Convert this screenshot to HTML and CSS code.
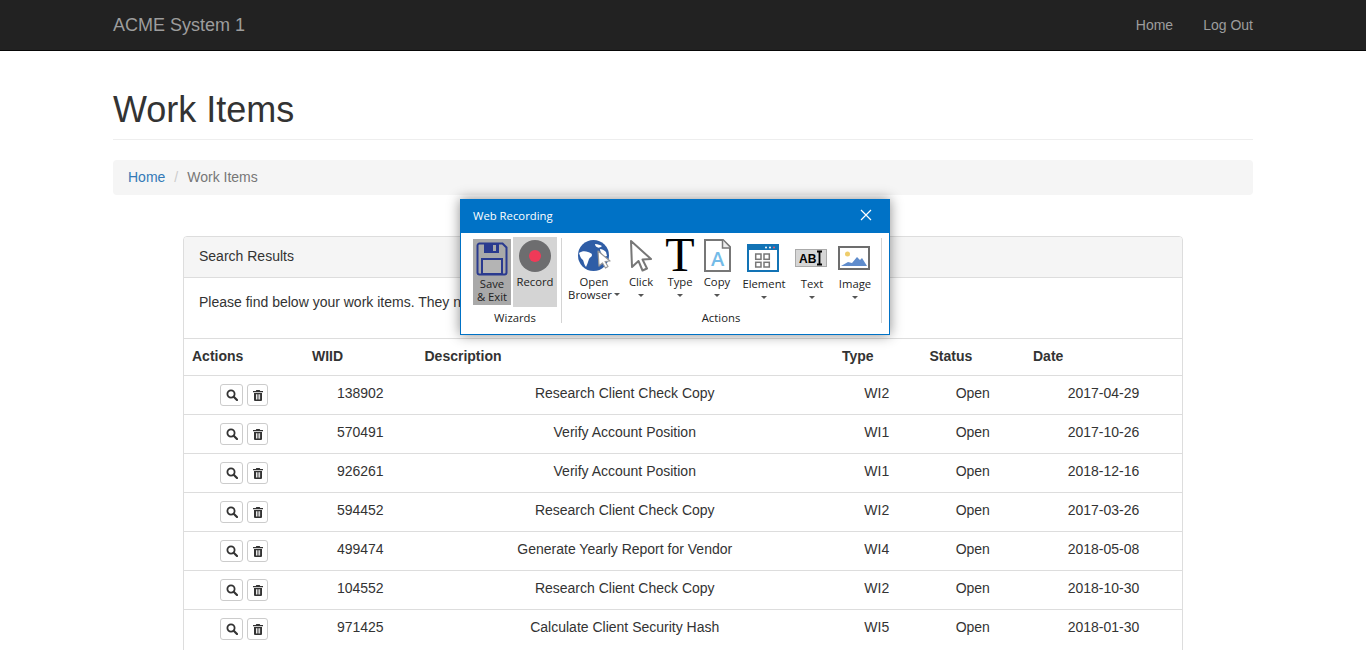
FILE: index.html
```html
<!DOCTYPE html>
<html lang="en">
<head>
<meta charset="utf-8">
<title>Work Items</title>
<link rel="stylesheet" href="styles.css">
</head>
<body>
<nav class="navbar">
  <div class="container navbar-inner">
    <a class="brand" href="#">ACME System 1</a>
    <ul class="nav-links">
      <li><a href="#">Home</a></li>
      <li><a href="#">Log Out</a></li>
    </ul>
  </div>
</nav>
<main class="container">
  <div class="page-header"><h1>Work Items</h1></div>
  <ol class="breadcrumb">
    <li><a href="#">Home</a></li>
    <li class="sep">/</li>
    <li class="active">Work Items</li>
  </ol>
  <section class="panel">
    <div class="panel-heading">Search Results</div>
    <div class="panel-body">Please find below your work items. They need to be completed in order.</div>
    <table class="table">
      <colgroup>
        <col class="c-actions"><col class="c-wiid"><col class="c-desc"><col class="c-type"><col class="c-status"><col class="c-date">
      </colgroup>
      <thead>
        <tr><th>Actions</th><th>WIID</th><th>Description</th><th class="th-nudge">Type</th><th class="th-nudge">Status</th><th>Date</th></tr>
      </thead>
      <tbody>
        <tr><td><div class="btns"><button class="btn btn-search"><svg viewBox="0 0 12 12" class="gi"><circle cx="5" cy="5" r="3.6" class="gi-ring"/><path d="M7.7 7.7 11 11" class="gi-handle"/></svg></button><button class="btn btn-trash"><svg viewBox="0 0 12 12" class="gi"><path d="M4.3 1h3.4l.5 1H11v1.2H1V2h2.800zM2 4h8v7a1 1 0 0 1-1 1H3a1 1 0 0 1-1-1zm2 1.200v5.300h.9V5.200zm1.600 0v5.300h.9V5.200zm1.600 0v5.300h.9V5.200z" fill-rule="evenodd"/></svg></button></div></td><td>138902</td><td>Research Client Check Copy</td><td>WI2</td><td>Open</td><td>2017-04-29</td></tr>
        <tr><td><div class="btns"><button class="btn btn-search"><svg viewBox="0 0 12 12" class="gi"><circle cx="5" cy="5" r="3.6" class="gi-ring"/><path d="M7.7 7.7 11 11" class="gi-handle"/></svg></button><button class="btn btn-trash"><svg viewBox="0 0 12 12" class="gi"><path d="M4.3 1h3.4l.5 1H11v1.2H1V2h2.800zM2 4h8v7a1 1 0 0 1-1 1H3a1 1 0 0 1-1-1zm2 1.200v5.300h.9V5.200zm1.600 0v5.300h.9V5.200zm1.600 0v5.300h.9V5.200z" fill-rule="evenodd"/></svg></button></div></td><td>570491</td><td>Verify Account Position</td><td>WI1</td><td>Open</td><td>2017-10-26</td></tr>
        <tr><td><div class="btns"><button class="btn btn-search"><svg viewBox="0 0 12 12" class="gi"><circle cx="5" cy="5" r="3.6" class="gi-ring"/><path d="M7.7 7.7 11 11" class="gi-handle"/></svg></button><button class="btn btn-trash"><svg viewBox="0 0 12 12" class="gi"><path d="M4.3 1h3.4l.5 1H11v1.2H1V2h2.800zM2 4h8v7a1 1 0 0 1-1 1H3a1 1 0 0 1-1-1zm2 1.200v5.300h.9V5.200zm1.600 0v5.300h.9V5.200zm1.600 0v5.300h.9V5.200z" fill-rule="evenodd"/></svg></button></div></td><td>926261</td><td>Verify Account Position</td><td>WI1</td><td>Open</td><td>2018-12-16</td></tr>
        <tr><td><div class="btns"><button class="btn btn-search"><svg viewBox="0 0 12 12" class="gi"><circle cx="5" cy="5" r="3.6" class="gi-ring"/><path d="M7.7 7.7 11 11" class="gi-handle"/></svg></button><button class="btn btn-trash"><svg viewBox="0 0 12 12" class="gi"><path d="M4.3 1h3.4l.5 1H11v1.2H1V2h2.800zM2 4h8v7a1 1 0 0 1-1 1H3a1 1 0 0 1-1-1zm2 1.200v5.300h.9V5.200zm1.600 0v5.300h.9V5.200zm1.600 0v5.300h.9V5.200z" fill-rule="evenodd"/></svg></button></div></td><td>594452</td><td>Research Client Check Copy</td><td>WI2</td><td>Open</td><td>2017-03-26</td></tr>
        <tr><td><div class="btns"><button class="btn btn-search"><svg viewBox="0 0 12 12" class="gi"><circle cx="5" cy="5" r="3.6" class="gi-ring"/><path d="M7.7 7.7 11 11" class="gi-handle"/></svg></button><button class="btn btn-trash"><svg viewBox="0 0 12 12" class="gi"><path d="M4.3 1h3.4l.5 1H11v1.2H1V2h2.800zM2 4h8v7a1 1 0 0 1-1 1H3a1 1 0 0 1-1-1zm2 1.200v5.300h.9V5.200zm1.600 0v5.300h.9V5.200zm1.600 0v5.300h.9V5.200z" fill-rule="evenodd"/></svg></button></div></td><td>499474</td><td>Generate Yearly Report for Vendor</td><td>WI4</td><td>Open</td><td>2018-05-08</td></tr>
        <tr><td><div class="btns"><button class="btn btn-search"><svg viewBox="0 0 12 12" class="gi"><circle cx="5" cy="5" r="3.6" class="gi-ring"/><path d="M7.7 7.7 11 11" class="gi-handle"/></svg></button><button class="btn btn-trash"><svg viewBox="0 0 12 12" class="gi"><path d="M4.3 1h3.4l.5 1H11v1.2H1V2h2.800zM2 4h8v7a1 1 0 0 1-1 1H3a1 1 0 0 1-1-1zm2 1.200v5.300h.9V5.200zm1.600 0v5.300h.9V5.200zm1.600 0v5.300h.9V5.200z" fill-rule="evenodd"/></svg></button></div></td><td>104552</td><td>Research Client Check Copy</td><td>WI2</td><td>Open</td><td>2018-10-30</td></tr>
        <tr><td><div class="btns"><button class="btn btn-search"><svg viewBox="0 0 12 12" class="gi"><circle cx="5" cy="5" r="3.6" class="gi-ring"/><path d="M7.7 7.7 11 11" class="gi-handle"/></svg></button><button class="btn btn-trash"><svg viewBox="0 0 12 12" class="gi"><path d="M4.3 1h3.4l.5 1H11v1.2H1V2h2.800zM2 4h8v7a1 1 0 0 1-1 1H3a1 1 0 0 1-1-1zm2 1.200v5.300h.9V5.200zm1.600 0v5.300h.9V5.200zm1.600 0v5.300h.9V5.200z" fill-rule="evenodd"/></svg></button></div></td><td>971425</td><td>Calculate Client Security Hash</td><td>WI5</td><td>Open</td><td>2018-01-30</td></tr>
      </tbody>
    </table>
  </section>
</main>

<aside class="recorder">
  <header class="rec-title">
    <span>Web Recording</span>
    <svg class="rec-close" viewBox="0 0 12 12"><path d="M1 1l10 10M11 1 1 11"/></svg>
  </header>
  <div class="ribbon">
    <div class="group group-wizards">
      <div class="group-items">
        <div class="wiz wiz-save">
          <svg class="ic-save" viewBox="0 0 32 34">
            <path d="M1.500 3.500a2 2 0 0 1 2-2h23l4 4v25a2 2 0 0 1-2 2h-25a2 2 0 0 1-2-2z" fill="#a9a9a9" stroke="#2a3a8f" stroke-width="2"/>
            <rect x="8" y="2" width="15" height="9" fill="#2a3a8f"/>
            <rect x="17" y="3" width="3" height="6" fill="#a9a9a9"/>
            <rect x="6" y="17" width="20" height="15" fill="#b4b4b4" stroke="#2a3a8f" stroke-width="2"/>
          </svg>
          <span>Save<br>&amp; Exit</span>
        </div>
        <div class="wiz wiz-record">
          <svg class="ic-record" viewBox="0 0 32 32"><circle cx="16" cy="16" r="16" fill="#6d6d6f"/><circle cx="16" cy="16" r="6" fill="#f03a58"/></svg>
          <span>Record</span>
        </div>
      </div>
      <div class="group-label">Wizards</div>
    </div>
    <div class="group group-actions">
      <div class="group-items">
        <div class="act act-open">
          <div class="act-icon">
            <svg class="ic-globe" viewBox="0 0 34 32">
              <circle cx="15.500" cy="15.500" r="15.500" fill="#2f5da6"/>
              <path d="M1 13c3-2 6-2 9-1 2 1 4 1 4 3 0 2-2 2-3 4-1 3-2 6-3 8-2-2-2-5-3-7-2-1-3-4-4-7zM17 4c3 0 5 1 7 2-2 2-4 2-5 1-1 0-2-2-2-3zM22 9c2 0 4 1 6 3l1 4c-2 1-3 0-4-1-2-2-3-4-3-6z" fill="#fff"/>
              <path d="M20 11 32 21l-5 .5 3 5-2.500 1.500-3-5-3.500 3z" fill="#fff" stroke="#999" stroke-width="1.200" stroke-linejoin="round"/>
            </svg>
          </div>
          <span>Open<br>Browser<i class="caret caret-inline"></i></span>
        </div>
        <div class="act act-click">
          <div class="act-icon">
            <svg class="ic-cursor" viewBox="0 0 24 33">
              <path d="M2 2 22 20l-8.500.5 4.500 9-4.500 2-4-9.500-6.500 6z" fill="#fff" stroke="#777" stroke-width="2" stroke-linejoin="round"/>
            </svg>
          </div>
          <span>Click</span><i class="caret"></i>
        </div>
        <div class="act act-type">
          <div class="act-icon"><span class="big-t">T</span></div>
          <span>Type</span><i class="caret"></i>
        </div>
        <div class="act act-copy">
          <div class="act-icon">
            <svg class="ic-copy" viewBox="0 0 27 33">
              <path d="M1 1h18l7 7v24H1z" fill="#fff" stroke="#777" stroke-width="2"/>
              <path d="M18.500 1v8H26" fill="#eee" stroke="#777" stroke-width="1.500"/>
              <text x="13.500" y="27" text-anchor="middle" class="copy-a">A</text>
            </svg>
          </div>
          <span>Copy</span><i class="caret"></i>
        </div>
        <div class="act act-element low">
          <div class="act-icon">
            <svg class="ic-element" viewBox="0 0 32 28">
              <rect x="1" y="1" width="30" height="26" fill="#fff" stroke="#1273b5" stroke-width="2"/>
              <rect x="1" y="1" width="30" height="5" fill="#1273b5"/>
              <circle cx="19" cy="3.500" r="1" fill="#fff"/><circle cx="23" cy="3.500" r="1" fill="#fff"/><circle cx="27" cy="3.500" r="1" fill="#f05a6a"/>
              <g fill="#fff" stroke="#777" stroke-width="1.500"><rect x="8.700" y="10" width="5.300" height="5.300"/><rect x="17" y="10" width="5.300" height="5.300"/><rect x="8.700" y="18.300" width="5.300" height="4.700"/><rect x="17" y="18.300" width="5.300" height="4.700"/></g>
            </svg>
          </div>
          <span>Element</span><i class="caret"></i>
        </div>
        <div class="act act-text low">
          <div class="act-icon">
            <svg class="ic-text" viewBox="0 0 32 18">
              <rect x=".5" y=".5" width="31" height="17" fill="#d6d6d6" stroke="#aaa"/>
              <text x="4" y="13.500" class="abi">AB</text>
              <path d="M22 2.500h5M22 15.500h5M24.500 2.500v13" stroke="#000" stroke-width="1.800" fill="none"/>
            </svg>
          </div>
          <span>Text</span><i class="caret"></i>
        </div>
        <div class="act act-image low">
          <div class="act-icon">
            <svg class="ic-image" viewBox="0 0 32 24">
              <rect x="1" y="1" width="30" height="22" fill="#fff" stroke="#6d6d6d" stroke-width="2"/>
              <circle cx="9.500" cy="8" r="2.500" fill="#efcd6b"/>
              <path d="M3 20l7-4 4 1 5-6 3 3 2-2 5 8z" fill="#5f8ccc"/>
            </svg>
          </div>
          <span>Image</span><i class="caret"></i>
        </div>
      </div>
      <div class="group-label group-label-actions">Actions</div>
    </div>
  </div>
</aside>
</body>
</html>
```
FILE: styles.css
```css
* { box-sizing: border-box; }
html { overflow: hidden; }
body {
  margin: 0;
  font-family: "Liberation Sans", Arial, sans-serif;
  font-size: 14px;
  line-height: 20px;
  color: #333;
  background: #fff;
}
a { color: #337ab7; text-decoration: none; }
.container { width: 1170px; margin: 0 auto; padding: 0 15px; }

.navbar { height: 51px; background: #222; border-bottom: 1px solid #080808; margin-bottom: 20px; }
.navbar-inner { display: flex; justify-content: space-between; height: 50px; align-items: center; }
.brand { font-size: 18px; color: #9d9d9d; }
.nav-links { display: flex; gap: 30px; list-style: none; margin: 0; padding: 0; }
.nav-links a { color: #9d9d9d; }

.page-header { margin: 40px 0 20px; padding-bottom: 9px; border-bottom: 1px solid #eee; }
h1 { margin: 0; padding-bottom: 2px; font-size: 36px; font-weight: 500; line-height: 37px; }

.breadcrumb {
  display: flex;
  list-style: none;
  margin: 0 0 41px;
  padding: 7px 15px;
  height: 35px;
  background: #f5f5f5;
  border-radius: 4px;
}
.sep { color: #ccc; padding: 0 9px; }
.active { color: #777; }

.panel { width: 1000px; margin: 0 auto; border: 1px solid #ddd; border-radius: 4px; padding-bottom: 20px; }
.panel-heading { height: 41px; padding: 9px 15px; background: #f5f5f5; border-bottom: 1px solid #ddd; border-radius: 3px 3px 0 0; }
.panel-body { height: 60px; padding: 14px 15px; }

.table { width: 100%; border-collapse: collapse; table-layout: fixed; }
.c-actions { width: 120px; }
.c-wiid { width: 112.5px; }
.c-desc { width: 416.5px; }
.c-type { width: 87.5px; }
.c-status { width: 104.5px; }
.table th, .table td { padding: 7px 8px 8px; border-top: 1px solid #ddd; height: 39px; }
.table th { text-align: left; height: 37px; padding: 6px 8px 9px; }
.table .th-nudge { padding-left: 9px; }
.table td { text-align: center; vertical-align: top; }

.btns { display: flex; justify-content: center; gap: 4px; height: 22px; margin-top: 1px; }
.btn { display: flex; align-items: center; justify-content: center; padding: 0; height: 22px; background: #fff; border: 1px solid #ccc; border-radius: 3px; color: #333; }
.btn-search { width: 23px; }
.btn-trash { width: 21px; }
.gi { width: 12px; height: 12px; fill: #333; display: block; }
.gi-ring { fill: none; stroke: #333; stroke-width: 1.800; }
.gi-handle { fill: none; stroke: #333; stroke-width: 2.200; stroke-linecap: round; }

/* floating recorder window */
.recorder {
  position: absolute;
  left: 460px;
  top: 199px;
  width: 430px;
  height: 136px;
  background: #fff;
  border: 1px solid #0072c6;
  box-shadow: 0 0 12px rgba(0, 0, 0, .45);
  font-family: "Open Sans", "Noto Sans", sans-serif;
  font-size: 11.3px;
  line-height: 13px;
  color: #222;
}
.rec-title { display: flex; align-items: center; justify-content: space-between; height: 33px; padding: 0 17px 3px 12px; background: #0072c6; color: #fff; }
.rec-close { width: 12px; height: 12px; stroke: #fff; stroke-width: 1.200; fill: none; }

.ribbon { display: flex; padding: 5px 9px 0 12px; height: 100px; }
.group { display: flex; flex-direction: column; flex: none; border-right: 1px solid #d4d4d4; height: 85px; }
.group-items { display: flex; flex: none; height: 68px; margin-top: -1px; }
.group-label { flex: none; margin-top: 6px; text-align: center; line-height: 14px; height: 14px; white-space: nowrap; }
.group-label-actions { width: 306px; }
.group-wizards { width: 89px; padding-right: 4px; }
.group-actions { width: 320px; padding-left: 6px; }

.wiz { display: flex; flex: none; flex-direction: column; align-items: center; text-align: center; color: #222; }
.wiz-save { width: 38px; height: 66px; margin-top: 2px; margin-right: 2px; background: #a9a9a9; }
.wiz-record { width: 44px; height: 70px; background: #d4d4d4; }
.ic-save { flex: none; width: 32px; height: 34px; margin: 3px 0 1px; }
.ic-record { flex: none; width: 32px; height: 32px; margin: 3px 0 3px; }

.act { display: flex; flex: none; flex-direction: column; align-items: center; text-align: center; white-space: nowrap; }
.act-icon { flex: none; height: 35px; display: flex; align-items: flex-end; justify-content: center; margin-bottom: 3px; }
.low .act-icon { margin-bottom: 5px; }
.act-open { width: 52px; }
.act-click { width: 42px; }
.act-type { width: 36px; }
.act-copy { width: 38px; }
.act-element { width: 56px; }
.act-text { width: 40px; }
.act-image { width: 46px; }

.caret { display: block; width: 0; height: 0; margin-top: 6px; border: 3px solid transparent; border-top: 3px solid #555; border-bottom: 0; }
.caret-inline { display: inline-block; margin: 0 0 2px 2px; vertical-align: middle; }

.ic-globe { width: 34px; height: 32px; margin-left: 2px; }
.ic-cursor { width: 24px; height: 33px; }
.ic-copy { width: 27px; height: 33px; }
.ic-element { width: 32px; height: 28px; margin-right: 2px; }
.ic-text { width: 32px; height: 18px; margin: 0 2px 5px 0; }
.ic-image { width: 32px; height: 24px; margin: 0 2px 2px 0; }
.big-t { font-family: "Liberation Serif", serif; font-size: 48px; line-height: 34px; height: 34px; color: #000; }
.copy-a { font-family: "Open Sans", sans-serif; font-size: 20px; font-weight: 600; fill: #74bbe8; }
.abi { font-family: "Liberation Sans", sans-serif; font-size: 12px; font-weight: 700; fill: #000; }
```
